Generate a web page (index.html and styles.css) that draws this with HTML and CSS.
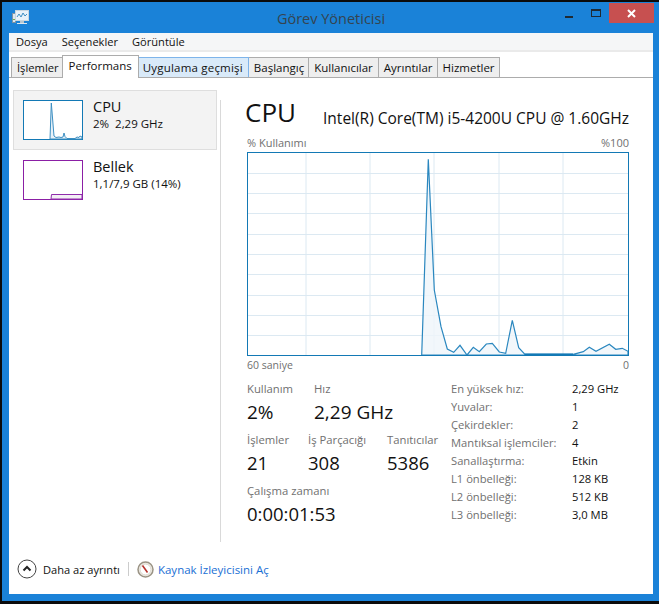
FILE: index.html
```html
<!DOCTYPE html>
<html lang="tr">
<head>
    <meta charset="UTF-8">
    <meta name="viewport" content="width=device-width, initial-scale=1.0">
    <title>Görev Yöneticisi</title>
    <link rel="stylesheet" href="styles.css">
</head>
<body>
    <div class="window">
        <div class="titlebar">
            <svg class="app-icon" width="17" height="15" viewBox="0 0 17 15">
                <rect x="0.5" y="3.5" width="3" height="9" fill="#dfe7ee" stroke="#7f95a6"/>
                <rect x="1" y="9" width="2" height="1" fill="#6fae4f"/>
                <rect x="3.5" y="0.5" width="13" height="10" fill="#e8f2fa" stroke="#c9d6df"/>
                <path d="M5 7 L7 4 L9 7 L11 3 L13 6 L15 4" fill="none" stroke="#3f8fc4"/>
                <rect x="8" y="11" width="4" height="2" fill="#b9c6d0"/>
                <rect x="5" y="13" width="10" height="1" fill="#dfe7ee"/>
            </svg>
            <div class="title">Görev Yöneticisi</div>
            <div class="controls">
                <div class="btn-min"></div>
                <div class="btn-max"></div>
                <div class="btn-close">
                    <svg width="9" height="9" viewBox="0 0 9 9"><path d="M1 1 L8 8 M8 1 L1 8" stroke="#fff" stroke-width="2"/></svg>
                </div>
            </div>
        </div>
        <div class="client">
            <div class="menubar">
                <span>Dosya</span>
                <span>Seçenekler</span>
                <span>Görüntüle</span>
            </div>
            <div class="tabs">
                <div class="tab tab-first">İşlemler</div>
                <div class="tab active">Performans</div>
                <div class="tab hover">Uygulama geçmişi</div>
                <div class="tab">Başlangıç</div>
                <div class="tab tab-wide">Kullanıcılar</div>
                <div class="tab">Ayrıntılar</div>
                <div class="tab">Hizmetler</div>
            </div>
            <div class="content">
                <div class="sidebar">
                    <div class="side-item selected">
                        <svg class="thumb" width="60" height="40" viewBox="0 0 60 40">
                            <rect x="0.5" y="0.5" width="59" height="39" fill="#fff" stroke="#1379b5"/>
                            <path d="M27 39 L28.3 3 L30 24 L31 36 L33 37.5 L36 37 L38 37.5 L40 37 L41 33 L42 36.5 L44 38.5 L52 38.5 L54 37 L56 37.5 L57 36 L59 37 L59 39 Z" fill="#e8f1f8" stroke="#3d8fc2"/>
                        </svg>
                        <div>
                            <div class="side-name">CPU</div>
                            <div class="side-info">2%&nbsp; 2,29 GHz</div>
                        </div>
                    </div>
                    <div class="side-item">
                        <svg class="thumb" width="60" height="40" viewBox="0 0 60 40">
                            <rect x="0.5" y="0.5" width="59" height="39" fill="#fff" stroke="#8b1fa5"/>
                            <path d="M28 39 L28.5 34.5 L59 34.5 L59 39 Z" fill="#f3eef5" stroke="#8f2cab"/>
                        </svg>
                        <div>
                            <div class="side-name">Bellek</div>
                            <div class="side-info">1,1/7,9 GB (14%)</div>
                        </div>
                    </div>
                </div>
                <div class="main">
                    <div class="heading">
                        <div class="heading-big">CPU</div>
                        <div class="heading-model">Intel(R) Core(TM) i5-4200U CPU @ 1.60GHz</div>
                    </div>
                    <div class="chart-labels chart-labels-top">
                        <span>% Kullanımı</span>
                        <span>%100</span>
                    </div>
                    <svg class="chart" width="382" height="204" viewBox="0 0 382 204">
                        <rect width="382" height="204" fill="#fff"/>
                        <path d="M59 1V203M123 1V203M187 1V203M252 1V203M316 1V203M1 21.5H381M1 41.5H381M1 61.5H381M1 82.5H381M1 102.5H381M1 122.5H381M1 143.5H381M1 163.5H381M1 183.5H381" stroke="#dce9f2" fill="none"/>
                        <path class="chart-line" d="M174.7 203 L181.3 7.3 L187.3 138 L194 174.7 L200.3 197 L206.7 200.3 L213 193.3 L220 203 L226.3 195.3 L232.3 199.7 L239.3 192 L245.3 191.3 L252.3 200 L258.7 201.3 L265.3 168.3 L271.7 195.7 L278 202.3 L326.3 202.3 L336.3 199.7 L342.3 195.3 L349 199.3 L362.3 192.3 L368.7 197.3 L375.3 196.3 L381 199.3 L381 203 Z"/>
                        <path d="M278 202.5 H326" stroke="#1379b5" stroke-width="2"/>
                        <rect x="0.5" y="0.5" width="381" height="203" fill="none" stroke="#1379b5"/>
                    </svg>
                    <div class="chart-labels chart-labels-bottom">
                        <span>60 saniye</span>
                        <span>0</span>
                    </div>
                    <div class="details">
                        <div class="stats">
                            <div class="stat-row">
                                <div class="stat stat-usage">
                                    <div class="stat-label">Kullanım</div>
                                    <div class="stat-value big">2%</div>
                                </div>
                                <div class="stat">
                                    <div class="stat-label">Hız</div>
                                    <div class="stat-value big">2,29 GHz</div>
                                </div>
                            </div>
                            <div class="stat-row">
                                <div class="stat stat-proc">
                                    <div class="stat-label">İşlemler</div>
                                    <div class="stat-value">21</div>
                                </div>
                                <div class="stat stat-thread">
                                    <div class="stat-label">İş Parçacığı</div>
                                    <div class="stat-value">308</div>
                                </div>
                                <div class="stat">
                                    <div class="stat-label">Tanıtıcılar</div>
                                    <div class="stat-value">5386</div>
                                </div>
                            </div>
                            <div class="stat-row">
                                <div class="stat">
                                    <div class="stat-label">Çalışma zamanı</div>
                                    <div class="stat-value">0:00:01:53</div>
                                </div>
                            </div>
                        </div>
                        <div class="specs">
                            <span class="spec-key">En yüksek hız:</span><span>2,29 GHz</span>
                            <span class="spec-key">Yuvalar:</span><span>1</span>
                            <span class="spec-key">Çekirdekler:</span><span>2</span>
                            <span class="spec-key">Mantıksal işlemciler:</span><span>4</span>
                            <span class="spec-key">Sanallaştırma:</span><span>Etkin</span>
                            <span class="spec-key">L1 önbelleği:</span><span>128 KB</span>
                            <span class="spec-key">L2 önbelleği:</span><span>512 KB</span>
                            <span class="spec-key">L3 önbelleği:</span><span>3,0 MB</span>
                        </div>
                    </div>
                </div>
            </div>
            <div class="footer">
                <svg class="less-icon" width="20" height="20" viewBox="0 0 20 20">
                    <circle cx="10" cy="10" r="9" fill="#fff" stroke="#444"/>
                    <path d="M6.5 11.5 L10 8 L13.5 11.5" fill="none" stroke="#222" stroke-width="2"/>
                </svg>
                <span class="less-text">Daha az ayrıntı</span>
                <div class="footer-sep"></div>
                <svg class="monitor-icon" width="17" height="17" viewBox="0 0 17 17">
                    <circle cx="8.5" cy="8.5" r="7.5" fill="#f2efe8" stroke="#9a9385" stroke-width="1.5"/>
                    <circle cx="8.5" cy="8.5" r="5.5" fill="#fff" stroke="#d8d4ca"/>
                    <path d="M5.5 4.5 L10.5 11.5" stroke="#b5322c" stroke-width="1.6"/>
                </svg>
                <span class="link">Kaynak İzleyicisini Aç</span>
            </div>
        </div>
    </div>
</body>
</html>
```

FILE: styles.css
```css
html, body {
    margin: 0;
    height: 100%;
}
body {
    font-family: "Open Sans", "Noto Sans", sans-serif;
    font-size: 11.5px;
    color: #111;
    background-color: #0b0b0b;
}
.window {
    box-sizing: border-box;
    height: 599px;
    margin: 2px 0 0 2px;
    width: 657px;
    background-color: #1a82d8;
    padding: 0 6px 7px 7px;
    display: flex;
    flex-direction: column;
}
.titlebar {
    height: 31px;
    flex: none;
    display: flex;
    position: relative;
    align-items: center;
}
.app-icon {
    margin: -1px 0 0 3px;
}
.title {
    position: absolute;
    left: 0;
    right: 0;
    top: 7px;
    text-align: center;
    font-size: 14.5px;
    color: #35444f;
}
.controls {
    margin-left: auto;
    margin-right: -1px;
    display: flex;
    align-self: flex-start;
}
.btn-min {
    width: 8px;
    height: 2px;
    margin: 14px 18px 0 0;
    background-color: #1f2a33;
}
.btn-max {
    box-sizing: border-box;
    width: 10px;
    height: 8px;
    margin: 7px 8px 0 0;
    border: 1px solid #1f2a33;
    border-top-width: 2px;
}
.btn-close {
    width: 45px;
    height: 20px;
    margin: 1px 0 0 0;
    background-color: #c75050;
    display: flex;
    align-items: center;
    justify-content: center;
}
.client {
    flex: 1;
    background-color: #fff;
    display: flex;
    flex-direction: column;
    min-height: 0;
}
.menubar {
    box-sizing: border-box;
    height: 19px;
    flex: none;
    background-color: #f5f6f7;
    border-bottom: 2px solid #eaeaea;
    display: flex;
    align-items: center;
    padding-left: 7px;
    gap: 14px;
    font-size: 11.1px;
}
.tabs {
    box-sizing: border-box;
    display: flex;
    height: 26px;
    flex: none;
    padding-left: 2px;
    border-bottom: 1px solid #acacac;
    align-items: flex-end;
}
.tab {
    box-sizing: border-box;
    height: 20px;
    padding: 0 4px 0 5px;
    border: 1px solid #acacac;
    border-bottom: none;
    border-left: none;
    background-color: #eee;
    line-height: 19px;
}
.tab-first {
    border-left: 1px solid #acacac;
    font-size: 11.2px;
    padding: 0 3px 0 5px;
    margin-right: -1px;
}
.tab-wide {
    padding-right: 5px;
}
.tab.active {
    height: 23px;
    margin-bottom: -1px;
    background-color: #fff;
    border-left: 1px solid #acacac;
    line-height: 20px;
    padding: 0 6px;
}
.tab.hover {
    background-color: #d9eaf9;
    border-color: #7eb4ea;
    padding: 0 5px 0 4px;
    letter-spacing: 0.2px;
}
.content {
    flex: 1;
    display: flex;
    min-height: 0;
}
.sidebar {
    box-sizing: border-box;
    width: 211px;
    padding: 12px 0 0 4px;
    flex: none;
}
.side-item {
    box-sizing: border-box;
    width: 204px;
    height: 60px;
    padding: 9px 0 0 9px;
    display: flex;
    gap: 10px;
    border: 1px solid transparent;
}
.side-item.selected {
    background-color: #f3f3f3;
    border-color: #dedede;
}
.thumb {
    flex: none;
}
.side-name {
    font-size: 14.5px;
    line-height: 16px;
    margin-top: -1px;
}
.side-info {
    font-size: 11.5px;
    line-height: 17px;
}
.main {
    flex: 1;
    margin: 22px 0 0 0;
    border-left: 1px solid #d9d9d9;
    padding-left: 26px;
    padding-right: 24px;
    display: flex;
    flex-direction: column;
}
.heading {
    display: flex;
    justify-content: space-between;
    align-items: flex-start;
    height: 28px;
    margin-top: -2px;
}
.heading-big {
    font-size: 26px;
    line-height: 28px;
    margin-left: -2px;
}
.heading-model {
    font-size: 15.5px;
    line-height: 20px;
    margin-top: 10px;
}
.chart-labels {
    display: flex;
    justify-content: space-between;
    color: #707070;
    font-size: 10.5px;
    line-height: 14px;
}
.chart-labels-top {
    font-size: 11px;
    margin-top: 10px;
}
.chart-labels-bottom {
    margin-top: 2px;
}
.chart {
    display: block;
    flex: none;
    margin-top: 2px;
}
.chart-line {
    fill: #eff5fa;
    fill-opacity: 0.8;
    stroke: #2a87bf;
    stroke-width: 1.2;
}
.details {
    display: flex;
    margin-top: 9px;
}
.stats {
    width: 204px;
    flex: none;
}
.stat-row {
    display: flex;
    height: 51px;
}
.stat-usage {
    width: 67px;
}
.stat-proc {
    width: 61px;
}
.stat-thread {
    width: 79px;
}
.stat-label {
    color: #707070;
    font-size: 11.3px;
    line-height: 16px;
}
.stat-value {
    font-size: 18.5px;
    line-height: 26px;
    margin-top: 2px;
}
.stat-value.big {
    font-size: 19px;
}
.specs {
    display: grid;
    grid-template-columns: 121px auto;
    grid-auto-rows: 18px;
    line-height: 18px;
    font-size: 11.2px;
    margin-top: -1px;
}
.spec-key {
    color: #707070;
}
.footer {
    box-sizing: border-box;
    height: 52px;
    flex: none;
    display: flex;
    align-items: center;
    padding: 2px 0 0 8px;
}
.less-text {
    margin-left: 6px;
    font-size: 11.1px;
}
.footer-sep {
    width: 1px;
    height: 14px;
    background-color: #ccc;
    margin: 0 8px;
}
.link {
    color: #1a6fd4;
    margin-left: 4px;
}
```
